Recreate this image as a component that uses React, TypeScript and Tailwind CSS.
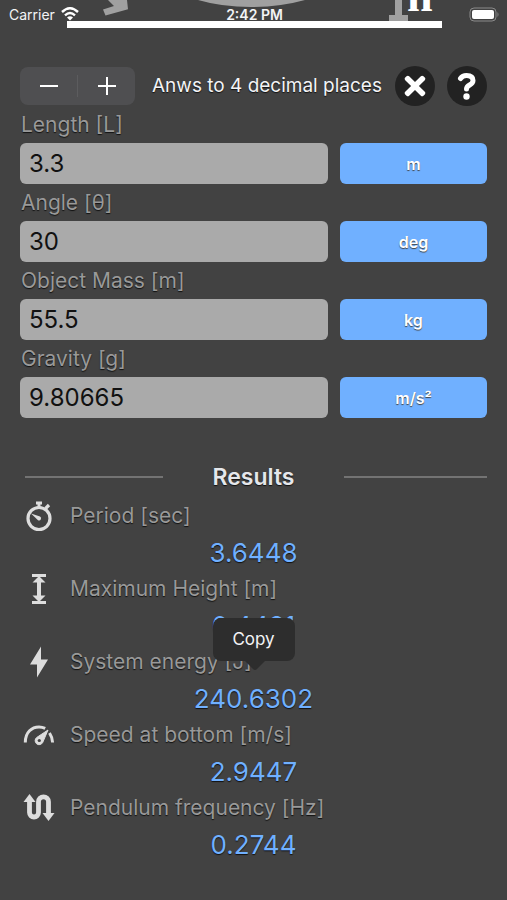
import { useState } from 'react';
import type { ReactNode } from 'react';
import { FaTimes } from 'react-icons/fa';

interface Field {
  id: string;
  label: string;
  value: string;
  unit: string;
}

interface Result {
  label: string;
  value: string;
  icon: ReactNode;
  copy?: boolean;
}

const FIELDS: Field[] = [
  { id: 'length', label: 'Length [L]', value: '3.3', unit: 'm' },
  { id: 'angle', label: 'Angle [θ]', value: '30', unit: 'deg' },
  { id: 'mass', label: 'Object Mass [m]', value: '55.5', unit: 'kg' },
  { id: 'gravity', label: 'Gravity [g]', value: '9.80665', unit: 'm/s²' },
];

const StopwatchIcon = () => (
  <svg viewBox="0 0 32 32" className="w-8 h-8" fill="none" stroke="currentColor">
    <circle cx="16" cy="18.5" r="11" strokeWidth="3.2" />
    <path d="M13 1.5h6v3h-1.500v3h-3v-3H13z" fill="currentColor" stroke="none" />
    <path d="M22.500 8.500l3.500-3.500" strokeWidth="3.200" />
    <path d="M8 13.500l9 3a2 2 0 0 1-2 3.700z" fill="currentColor" stroke="none" />
  </svg>
);

const HeightIcon = () => (
  <svg viewBox="0 0 32 32" className="w-8 h-8" fill="currentColor">
    <path d="M9 1h14v3H9zM9 28h14v3H9zM16 3l6.500 6.500h-4.500v13h4.500L16 29l-6.500-6.500H14v-13H9.500z" />
  </svg>
);

const BoltIcon = () => (
  <svg viewBox="0 0 32 32" className="w-8 h-8" fill="currentColor">
    <path d="M18 0.500L7 18.500h7L14 31.500 25 13.500h-7z" />
  </svg>
);

const GaugeIcon = () => (
  <svg viewBox="0 0 32 32" className="w-8 h-8" fill="none" stroke="currentColor" strokeWidth="3">
    <path d="M2.300 23.500C2.300 13 9 8 16 8c2.500 0 4.500.600 6.200 1.400" />
    <path d="M26.500 14c2 3 3 6.500 3.100 9.500" />
    <path d="M25 11l-5.300 12.500a4 4 0 1 1-6-5z" fill="currentColor" strokeWidth="1" />
    <circle cx="16.300" cy="21.500" r="1.600" fill="#424242" stroke="none" />
  </svg>
);

const FrequencyIcon = () => (
  <svg viewBox="0 0 32 32" className="w-8 h-8" fill="none" stroke="currentColor" strokeWidth="4.800">
    <path d="M6.500 8v12.500a4.500 4.500 0 0 0 9 0V9.800a5 5 0 0 1 10 0V22" />
    <path d="M.500 10L6.500 2l6 8zM19.500 21l6 8 6-8z" fill="currentColor" stroke="none" />
  </svg>
);

const RESULTS: Result[] = [
  { label: 'Period [sec]', value: '3.6448', icon: <StopwatchIcon /> },
  { label: 'Maximum Height [m]', value: '0.4421', icon: <HeightIcon /> },
  { label: 'System energy [J]', value: '240.6302', icon: <BoltIcon />, copy: true },
  { label: 'Speed at bottom [m/s]', value: '2.9447', icon: <GaugeIcon /> },
  { label: 'Pendulum frequency [Hz]', value: '0.2744', icon: <FrequencyIcon /> },
];

function StatusBar() {
  return (
    <header className="relative h-[66px] shrink-0 overflow-hidden">
      {/* bottom edge of the scrolled pendulum diagram */}
      <svg viewBox="0 0 507 66" className="absolute inset-x-0 top-0 w-full" aria-hidden="true">
        <path d="M108 0l6 6-11 3.500 2.500 6L128 9.300 127 0z" fill="#a0a0a0" />
        <path d="M198 0Q222 7 251 7T305 0z" fill="#a0a0a0" />
        <path d="M395 0h7v15h6v6h-19v-6h6z" fill="#a0a0a0" />
        <text x="407" y="11" fontFamily="Liberation Serif, serif" fontSize="46" fontWeight="bold" fill="#fff">h</text>
        <path d="M67 21h375v7H67z" fill="#fff" />
      </svg>
      <div className="relative grid grid-cols-3 items-center h-7 pl-[9px] pr-[7px] text-[14px] text-gray-100">
        <div className="flex items-center gap-[6px]">
          <span>Carrier</span>
          <svg viewBox="0 0 18 14" className="w-[18px] h-[14px]" fill="none" stroke="#fff" strokeWidth="2.400">
            <path d="M1 5Q9-2.500 17 5M4 8.300q5-4.500 10 0" />
            <path d="M6 10.500q3-2.500 6 0l-3 3z" fill="#fff" stroke="none" />
          </svg>
        </div>
        <span className="text-center font-semibold">2:42 PM</span>
        <svg viewBox="0 0 31 15" className="w-[31px] h-[15px] justify-self-end">
          <rect x="1" y="1" width="26" height="13" rx="4" fill="none" stroke="#8a8a8a" />
          <rect x="3" y="3" width="22" height="9" rx="2" fill="#fff" />
          <path d="M28.500 5q2 2.500 0 5z" fill="#8a8a8a" />
        </svg>
      </div>
    </header>
  );
}

function Toolbar() {
  return (
    <div className="flex items-center h-10">
      <div className="flex items-center w-[115px] h-[38px] rounded-lg bg-[#4f4f51]">
        <button aria-label="Fewer decimals" className="flex-1 flex justify-center">
          <svg viewBox="0 0 18 18" className="w-[18px] h-[18px]" stroke="#fff" strokeWidth="2">
            <path d="M0 9h18" />
          </svg>
        </button>
        <span className="w-px h-[22px] bg-[#5c5c5e]" />
        <button aria-label="More decimals" className="flex-1 flex justify-center">
          <svg viewBox="0 0 18 18" className="w-[18px] h-[18px]" stroke="#fff" strokeWidth="2">
            <path d="M0 9h18M9 0v18" />
          </svg>
        </button>
      </div>
      <p className="flex-1 pl-[17px] text-[19px] whitespace-nowrap text-gray-100 text-shadow-[0_1px_1px_#111]">
        Anws to 4 decimal places
      </p>
      <button
        aria-label="Close"
        className="flex items-center justify-center w-10 h-10 mr-3 rounded-full bg-[#222] text-white"
      >
        <FaTimes size={30} />
      </button>
      <button
        aria-label="Help"
        className="flex items-center justify-center w-10 h-10 rounded-full bg-[#222] text-white"
      >
        <svg viewBox="0 0 20 28" className="w-5 h-7" fill="none" stroke="currentColor">
          <path d="M3.500 6.500Q5.500 3.500 9.500 3.500C13.500 3.500 16 5 16 8.500c0 5-6.500 4-6.500 8.500" strokeWidth="5" strokeLinecap="round" />
          <circle cx="9.500" cy="24.500" r="3.200" fill="currentColor" stroke="none" />
        </svg>
      </button>
    </div>
  );
}

function FieldRow({ field }: { field: Field }) {
  const [value, setValue] = useState(field.value);

  return (
    <div>
      <label
        htmlFor={field.id}
        className="block h-[37px] pl-px text-[21px] leading-[37px] text-[#999] text-shadow-[0_1px_1px_#111]"
      >
        {field.label}
      </label>
      <div className="flex gap-3">
        <input
          id={field.id}
          value={value}
          onChange={(e) => setValue(e.target.value)}
          inputMode="decimal"
          className="flex-1 min-w-0 h-[41px] px-[9px] rounded-md bg-[#aaa] text-[24px] text-[#111] outline-none"
        />
        <button className="w-[147px] h-[41px] rounded-md bg-[#70b0ff] text-[16px] font-semibold text-white text-shadow-[0_1px_1px_#444]">
          {field.unit}
        </button>
      </div>
    </div>
  );
}

function ResultRow({ result }: { result: Result }) {
  return (
    <div>
      <dt className="flex items-center h-9 gap-[15px] pl-[3px] text-[21px] text-[#999] text-shadow-[0_1px_1px_#111]">
        <span className="flex justify-center w-8 text-[#ddd]">{result.icon}</span>
        {result.label}
      </dt>
      <dd className="relative h-[37px] text-center text-[26px] leading-[37px] text-[#70b0ff] text-shadow-[0_1px_1px_#111]">
        {result.value}
        {result.copy && (
          <button className="absolute left-1/2 bottom-full mb-[19px] -translate-x-1/2 w-[82px] h-[43px] rounded-lg bg-[#2d2d2d] text-[17px] text-gray-100 text-shadow-none">
            Copy
            <svg viewBox="0 0 20 10" className="absolute left-8 top-full w-5 h-[10px]" fill="#2d2d2d">
              <path d="M0 0h20l-8 8q-2 2-4 0z" />
            </svg>
          </button>
        )}
      </dd>
    </div>
  );
}

export default function App() {
  return (
    <div className="min-h-screen flex flex-col bg-[#424242] font-['Inter','Liberation_Sans',sans-serif]">
      <StatusBar />
      <main className="px-5">
        <Toolbar />
        <form onSubmit={(e) => e.preventDefault()}>
          {FIELDS.map((field) => (
            <FieldRow key={field.id} field={field} />
          ))}
        </form>

        {/* Results */}
        <div className="flex items-center gap-[50px] h-9 mt-[41px]">
          <div className="flex-1 basis-0">
            <div className="h-0.5 ml-[5px] bg-[#737373]" />
          </div>
          <h2 className="text-[23px] font-semibold text-gray-200 text-shadow-[0_1px_1px_#111]">Results</h2>
          <div className="flex-1 basis-0 h-0.5 bg-[#737373]" />
        </div>
        <dl className="pt-[3px]">
          {RESULTS.map((result) => (
            <ResultRow key={result.label} result={result} />
          ))}
        </dl>
      </main>
    </div>
  );
}
